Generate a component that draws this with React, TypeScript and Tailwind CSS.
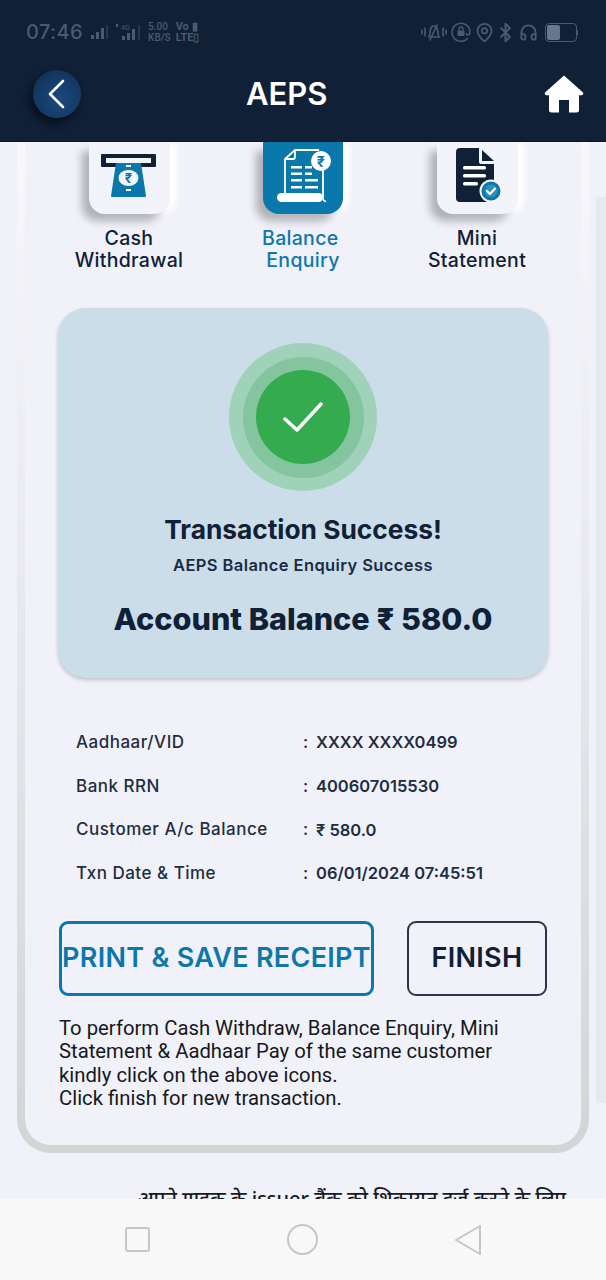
import { Bluetooth, Headphones, MapPin } from "lucide-react";

const details = [
  { label: "Aadhaar/VID", value: "XXXX XXXX0499" },
  { label: "Bank RRN", value: "400607015530" },
  { label: "Customer A/c Balance", value: "₹ 580.0" },
  { label: "Txn Date & Time", value: "06/01/2024 07:45:51" },
];

function StatusBar() {
  return (
    <div className="flex h-[64px] items-center justify-between pl-[26px] pr-[28px] text-[#4a5a6f]">
      <div className="flex items-center">
        <span className="text-[20px] font-medium tracking-[0.4px]">07:46</span>
        {/* signal bars */}
        <svg width="20" height="16" viewBox="0 0 20 16" className="ml-[7px]" fill="currentColor">
          <rect x="1" y="11" width="3" height="4" />
          <rect x="6" y="8" width="3" height="7" />
          <rect x="11" y="4" width="3" height="11" />
          <rect x="16" y="1" width="2" height="14" opacity="0.4" />
        </svg>
        <svg width="26" height="18" viewBox="0 0 26 18" className="ml-[6px]" fill="currentColor">
          <text x="5" y="7" fontSize="7" fontFamily="Roboto, sans-serif">4G</text>
          <rect x="0" y="1" width="2" height="3" />
          <rect x="6" y="13" width="3" height="4" />
          <rect x="11" y="10" width="3" height="7" />
          <rect x="16" y="6" width="3" height="11" />
          <rect x="22" y="2" width="2" height="15" opacity="0.4" />
        </svg>
        <div className="ml-[6px] flex flex-col text-[10px] font-medium leading-[11px] font-['Roboto',sans-serif]">
          <span>5.00</span>
          <span>KB/S</span>
        </div>
        <div className="ml-[5px] flex flex-col text-[11px] font-bold leading-[11px] font-['Roboto',sans-serif]">
          <span>Vo ▮</span>
          <span>LTE▯</span>
        </div>
      </div>
      <div className="flex items-center">
        {/* vibrate */}
        <svg width="26" height="22" viewBox="0 0 26 20" fill="none" stroke="currentColor" strokeWidth="1.6" strokeLinecap="round">
          <path d="M1 8v4M4 6v8M22 6v8M25 8v4" />
          <path d="M8 15c1-2 1-5 1.5-7.5C10 5 11.500 4 13 4s3 1 3.500 3.500S17 13 18 15z" />
          <path d="M16 3 9 18" />
        </svg>
        {/* screen-lock in a ring */}
        <svg width="20" height="20" viewBox="0 0 20 20" className="ml-[4px]" fill="none" stroke="currentColor" strokeWidth="1.6">
          <path d="M17 16a9 9 0 1 1 2-6c0 2-1 3-2 3s-1.500-1-1.500-2" />
          <rect x="6.500" y="8.500" width="7" height="5.500" fill="currentColor" stroke="none" rx="1" />
          <path d="M8 8.500V7a2 2 0 0 1 4 0v1.500" strokeWidth="1.300" />
        </svg>
        <MapPin size={21} strokeWidth={2} className="ml-[3px]" />
        <Bluetooth size={21} strokeWidth={2.400} />
        <Headphones size={19} strokeWidth={2.400} className="ml-[3px]" />
        <div className="ml-[7px] flex items-center">
          <div className="flex h-[19px] w-[32px] rounded-[4px] border border-current p-[1px]">
            <div className="w-[13px] rounded-[2px] bg-[#68778a]" />
          </div>
          <div className="h-[5px] w-[1px] bg-current" />
        </div>
      </div>
    </div>
  );
}

function Header() {
  return (
    <header className="z-10 h-[142px] shrink-0 border-b border-[#0a1626] bg-[#0f2037]">
      <StatusBar />
      <div className="flex h-[60px] items-center pl-[33px] pr-[22px]">
        <button className="flex h-[48px] w-[48px] items-center justify-center rounded-full bg-[radial-gradient(circle_at_55%_60%,#1b4a7e_0%,#143a66_55%,#10294a_100%)] shadow-[-3px_5px_8px_rgba(0,0,0,0.55)]">
          <svg width="18" height="30" viewBox="0 0 18 30" fill="none" stroke="#fff" strokeWidth="2.600" strokeLinecap="round" strokeLinejoin="round">
            <path d="M15 2 2 15l13 13" />
          </svg>
        </button>
        <h1 className="ml-[165px] text-[31px] font-semibold text-white">AEPS</h1>
        <svg width="40" height="38" viewBox="0 0 40 38" fill="#fff" className="ml-auto">
          <path d="M20 0.500 39 17.500c.8 1.200 0 2.800-1.500 2.800H35V35a2.500 2.500 0 0 1-2.500 2.500H25V25h-10v12.500H7.500A2.500 2.500 0 0 1 5 35V20.300H2.500c-1.500 0-2.300-1.600-1.500-2.800z" />
        </svg>
      </div>
    </header>
  );
}

function CashIcon() {
  return (
    <svg width="56" height="44" viewBox="0 0 56 44">
      <path fillRule="evenodd" d="M1 0h53a1 1 0 0 1 1 1v11a1 1 0 0 1-1 1H1a1 1 0 0 1-1-1V1a1 1 0 0 1 1-1zM5 4v5h45V4z" fill="#0f2037" />
      <path d="M15 9h25l5 33a1 1 0 0 1-1 1H11a1 1 0 0 1-1-1z" fill="#0b78ab" />
      <rect x="25" y="11" width="5" height="2" fill="#fff" />
      <rect x="25" y="35" width="5" height="2" fill="#fff" />
      <ellipse cx="27.500" cy="24" rx="10" ry="8" fill="#f3f4fa" />
      <text x="27.500" y="29" textAnchor="middle" fontSize="13" fontWeight="700" fill="#0b78ab" fontFamily="Inter, sans-serif">₹</text>
    </svg>
  );
}

function BalanceIcon() {
  return (
    <svg width="56" height="54" viewBox="0 0 56 54">
      {/* page outline with a folded corner */}
      <path d="M8 46V10L18 1h24M46 18v30M18 1v7a2 2 0 0 1-2 2H8" fill="none" stroke="#fff" strokeWidth="1.800" strokeLinejoin="round" />
      <rect x="0" y="44" width="46" height="9" rx="4.500" fill="#fff" />
      <path d="M46 46v3a3.500 3.500 0 0 0 3 3.500" fill="none" stroke="#fff" strokeWidth="1.500" />
      <rect x="14" y="17" width="11" height="2.500" fill="#fff" />
      <rect x="28" y="17" width="7" height="2.500" fill="#fff" />
      <rect x="14" y="23.500" width="11" height="2.500" fill="#fff" />
      <rect x="28" y="23.500" width="7" height="2.500" fill="#fff" />
      <rect x="14" y="30" width="11" height="2.500" fill="#fff" />
      <rect x="28" y="30" width="13" height="2.500" fill="#fff" />
      <rect x="14" y="37" width="11" height="2.500" fill="#fff" />
      <rect x="28" y="37" width="13" height="2.500" fill="#fff" />
      <circle cx="44" cy="12" r="10" fill="#fff" />
      <text x="44" y="17.500" textAnchor="middle" fontSize="14" fontWeight="700" fill="#0b78ab" fontFamily="Inter, sans-serif">₹</text>
    </svg>
  );
}

function MiniIcon() {
  return (
    <svg width="50" height="56" viewBox="0 0 50 56">
      <path d="M4 0h19v14a2 2 0 0 0 2 2h13v34a4 4 0 0 1-4 4H4a4 4 0 0 1-4-4V4a4 4 0 0 1 4-4z" fill="#0f2037" />
      <path d="M26 2l12 11H26z" fill="#0f2037" />
      <rect x="7" y="18" width="23" height="3.500" rx="1.500" fill="#fff" />
      <rect x="7" y="26" width="23" height="3.500" rx="1.500" fill="#fff" />
      <rect x="7" y="34" width="15" height="3.500" rx="1.500" fill="#fff" />
      <circle cx="35" cy="43" r="10.500" fill="#0b78ab" stroke="#f3f4fa" strokeWidth="2" />
      <circle cx="35" cy="43" r="6.500" fill="#2f8fbb" />
      <path d="M31 43l3 3 5-5.500" fill="none" stroke="#fff" strokeWidth="2.200" strokeLinecap="round" strokeLinejoin="round" />
    </svg>
  );
}

function Services() {
  return (
    <div className="grid grid-cols-3 px-[17px] text-center text-[19.500px] font-medium leading-[22px] tracking-[0.3px] text-[#0f2037]">
      <div className="flex flex-col items-center">
        <div className="flex h-[72px] w-[81px] items-start justify-center rounded-b-[16px] bg-[#f3f4fa] pt-[12px] shadow-[-8px_8px_9px_-1px_rgba(0,0,0,0.27),7px_0_7px_#fff]">
          <CashIcon />
        </div>
        <p className="mt-[13px]">Cash<br />Withdrawal</p>
      </div>
      <div className="flex flex-col items-center text-[#0b78ab]">
        <div className="flex h-[72px] w-[80px] items-start justify-center rounded-b-[16px] bg-[#0b78ab] pl-[4px] pt-[7px] shadow-[-8px_8px_9px_-1px_rgba(0,0,0,0.27),7px_0_7px_#fff]">
          <BalanceIcon />
        </div>
        <p className="mt-[13px]">{"Balance\u00a0"}<br />Enquiry</p>
      </div>
      <div className="flex flex-col items-center">
        <div className="flex h-[72px] w-[81px] items-start justify-center rounded-b-[16px] bg-[#f3f4fa] pl-[7px] pt-[6px] shadow-[-8px_8px_9px_-1px_rgba(0,0,0,0.27),7px_0_7px_#fff]">
          <MiniIcon />
        </div>
        <p className="mt-[13px]">Mini<br />Statement</p>
      </div>
    </div>
  );
}

function SuccessCard() {
  return (
    <div className="mx-[33px] mt-[37px] flex h-[370px] flex-col items-center rounded-[28px] bg-[#cbdde9] pt-[35px] text-[#0f2037] shadow-[0_2px_4px_rgba(0,0,0,0.2)]">
      <div className="flex h-[148px] w-[148px] items-center justify-center rounded-full bg-[#9fd2b9]">
        <div className="flex h-[121px] w-[121px] items-center justify-center rounded-full bg-[#84c5a0]">
          <div className="flex h-[94px] w-[94px] items-center justify-center rounded-full bg-[#34ab4f]">
            <svg width="40" height="30" viewBox="0 0 40 30" fill="none" stroke="#fff" strokeWidth="3.500" strokeLinecap="round" strokeLinejoin="round">
              <path d="M2 17l12 11L38 2" />
            </svg>
          </div>
        </div>
      </div>
      <h2 className="mt-[21px] text-[26.300px] font-bold leading-[36px]">Transaction Success!</h2>
      <p className="mt-[6px] text-[16.500px] font-semibold leading-[22px] tracking-[0.4px] text-[#1a2b42]">AEPS Balance Enquiry Success</p>
      <p className="mt-[23px] text-[30.600px] font-extrabold leading-[40px]">Account Balance ₹ 580.0</p>
    </div>
  );
}

function DetailRows() {
  return (
    <div className="mt-[43px] pl-[51px] text-[17px] font-medium text-[#1f2d40]">
      {details.map((row) => (
        <div key={row.label} className="flex h-[43.670px] items-center">
          <span className="w-[227px] tracking-[0.5px]">{row.label}</span>
          <span className="w-[13px]">:</span>
          <span className="text-[16.500px] font-semibold">{row.value}</span>
        </div>
      ))}
    </div>
  );
}

export default function App() {
  return (
    <div className="relative flex h-[1280px] w-[606px] flex-col overflow-hidden bg-[#f0f1f9] font-['Inter',sans-serif]">
      <Header />
      <main className="relative flex-1 overflow-hidden">
        {/* frame round the scrolled content */}
        <div className="ml-[17px] h-[1011px] w-[572px] rounded-b-[34px] bg-gradient-to-b from-[#f8f8fb] via-[#e6e7ea] to-[#d3d5d5] px-[8px] pb-[8px]">
          <div className="h-full rounded-b-[26px] bg-[#f0f1f9]">
            <Services />
            <SuccessCard />
            <DetailRows />

            <div className="mt-[25px] flex gap-[33px] pl-[34px]">
              <button className="flex h-[75px] w-[315px] items-center justify-center rounded-[9px] border-[3px] border-[#0b78ab] text-[27px] font-semibold tracking-[0.3px] whitespace-nowrap text-[#0b78ab]">
                PRINT &amp; SAVE RECEIPT
              </button>
              <button className="h-[75px] w-[140px] rounded-[9px] border-[2.500px] border-[#2a3548] text-[27px] font-semibold tracking-[0.3px] text-[#0f2037]">
                FINISH
              </button>
            </div>

            <p className="mt-[21px] pl-[34px] font-['Roboto',sans-serif] text-[20.300px] leading-[23.500px] text-[#16181d]">
              To perform Cash Withdraw, Balance Enquiry, Mini<br />
              Statement &amp; Aadhaar Pay of the same customer<br />
              kindly click on the above icons.<br />
              Click finish for new transaction.
            </p>
          </div>
        </div>
        <p className="mt-[34px] pl-[138px] font-['Noto_Sans',sans-serif] text-[20px] font-medium leading-[24px] whitespace-nowrap text-[#16181d]">
          अपने ग्राहक के issuer बैंक को शिकायत दर्ज करने के लिए
        </p>
        {/* scrollbar */}
        <div className="absolute right-0 top-[55px] h-[906px] w-[10px] bg-[#e8e9f0]" />
      </main>
      <nav className="flex h-[81px] shrink-0 items-center justify-between bg-[#f8f8f8] pl-[125px] pr-[124px]">
        <div className="h-[25px] w-[25px] rounded-[3px] border-2 border-[#c6c6c6]" />
        <div className="h-[31px] w-[31px] rounded-full border-2 border-[#c6c6c6]" />
        <svg width="28" height="32" viewBox="0 0 28 32" fill="none" stroke="#c6c6c6" strokeWidth="2" strokeLinejoin="round">
          <path d="M26 2v28L2 16z" />
        </svg>
      </nav>
    </div>
  );
}
